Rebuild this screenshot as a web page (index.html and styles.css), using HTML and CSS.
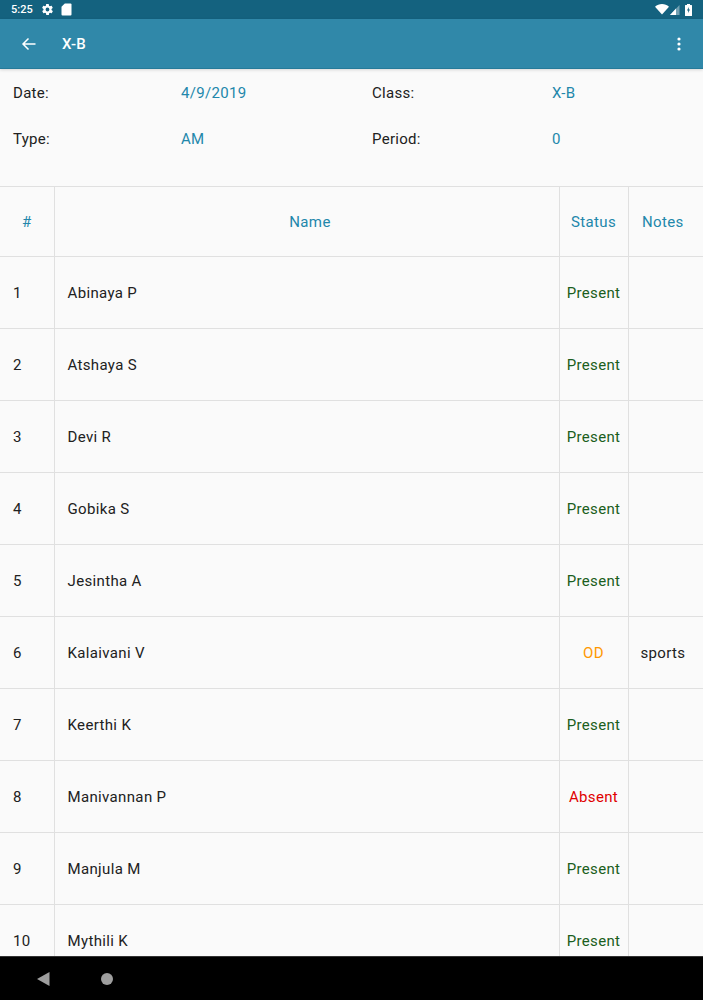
FILE: index.html
```html
<!DOCTYPE html>
<html lang="en">
<head>
<meta charset="utf-8">
<title>X-B</title>
<link rel="stylesheet" href="styles.css">
</head>
<body>
<div class="screen">
  <div class="statusbar">
    <span class="time">5:25</span>
    <svg class="st-icon" width="13" height="13" viewBox="0 0 24 24"><path fill="#fff" d="M19.4 13a7.5 7.5 0 0 0 0-2l2.1-1.6a.5.5 0 0 0 .1-.7l-2-3.4a.5.5 0 0 0-.6-.2l-2.5 1a7.300 7.300 0 0 0-1.700-1l-.4-2.700a.5.5 0 0 0-.5-.4h-4a.5.500 0 0 0-.5.400l-.4 2.700a7.300 7.300 0 0 0-1.700 1l-2.500-1a.5.5 0 0 0-.6.200l-2 3.400a.5.5 0 0 0 .1.700L4.600 11a7.500 7.500 0 0 0 0 2l-2.100 1.600a.5.5 0 0 0-.1.700l2 3.400a.5.5 0 0 0 .6.200l2.500-1a7.300 7.300 0 0 0 1.700 1l.4 2.700a.5.5 0 0 0 .5.400h4a.5.5 0 0 0 .5-.4l.4-2.700a7.300 7.300 0 0 0 1.700-1l2.500 1a.5.5 0 0 0 .6-.2l2-3.400a.5.5 0 0 0-.1-.7zM12 15.500a3.500 3.500 0 1 1 0-7 3.500 3.500 0 0 1 0 7z"/></svg>
    <svg class="st-icon sd" width="11" height="13" viewBox="0 0 11 13"><path fill="#fff" d="M3.800 .5H9.500a1 1 0 0 1 1 1v10a1 1 0 0 1-1 1h-8a1 1 0 0 1-1-1V3.800z"/></svg>
    <span class="spacer"></span>
    <svg class="wifi" width="14" height="11" viewBox="0 0 14 11"><path fill="#fff" d="M0 2.800C2 1 4.400 0 7 0s5 1 7 2.800L7 10.500z"/></svg>
    <svg class="signal" width="10" height="10" viewBox="0 0 10 10"><path fill="#fff" fill-opacity=".4" d="M9.500 0v10H0z"/><path fill="#fff" d="M6 3.500V10H0z"/></svg>
    <svg class="battery" width="7" height="12" viewBox="0 0 7 12"><path fill="#fff" d="M2 0h3v1h1.500a.5.5 0 0 1 .5.500v10a.5.5 0 0 1-.5.500h-6a.5.5 0 0 1-.5-.5v-10A.5.5 0 0 1 .5 1H2z"/><path fill="#14627f" d="M3.800 3 2 6.500h1.200L3 9l2-3.500H3.800z"/></svg>
  </div>
  <header class="appbar">
    <svg class="back" width="16" height="16" viewBox="0 0 16 16"><path fill="none" stroke="#fff" stroke-width="1.500" d="M14.500 8H2M7.500 2.500 2 8l5.500 5.500"/></svg>
    <h1 class="title">X-B</h1>
    <span class="spacer"></span>
    <svg class="more" width="4" height="14" viewBox="0 0 4 14"><circle fill="#fff" cx="2" cy="2" r="1.600"/><circle fill="#fff" cx="2" cy="7" r="1.600"/><circle fill="#fff" cx="2" cy="12" r="1.600"/></svg>
  </header>
  <main class="content">
    <section class="meta">
      <span class="m-label">Date:</span><span class="m-value">4/9/2019</span>
      <span class="m-label">Class:</span><span class="m-value">X-B</span>
      <span class="m-label">Type:</span><span class="m-value">AM</span>
      <span class="m-label">Period:</span><span class="m-value">0</span>
    </section>
    <table class="sheet">
      <colgroup><col class="c-num"><col class="c-name"><col class="c-status"><col class="c-notes"></colgroup>
      <thead>
        <tr><th>#</th><th class="th-name">Name</th><th>Status</th><th class="th-notes">Notes</th></tr>
      </thead>
      <tbody>
        <tr><td class="num">1</td><td class="name">Abinaya P</td><td class="status present">Present</td><td class="notes"></td></tr>
        <tr><td class="num">2</td><td class="name">Atshaya S</td><td class="status present">Present</td><td class="notes"></td></tr>
        <tr><td class="num">3</td><td class="name">Devi R</td><td class="status present">Present</td><td class="notes"></td></tr>
        <tr><td class="num">4</td><td class="name">Gobika S</td><td class="status present">Present</td><td class="notes"></td></tr>
        <tr><td class="num">5</td><td class="name">Jesintha A</td><td class="status present">Present</td><td class="notes"></td></tr>
        <tr><td class="num">6</td><td class="name">Kalaivani V</td><td class="status od">OD</td><td class="notes">sports</td></tr>
        <tr><td class="num">7</td><td class="name">Keerthi K</td><td class="status present">Present</td><td class="notes"></td></tr>
        <tr><td class="num">8</td><td class="name">Manivannan P</td><td class="status absent">Absent</td><td class="notes"></td></tr>
        <tr><td class="num">9</td><td class="name">Manjula M</td><td class="status present">Present</td><td class="notes"></td></tr>
        <tr><td class="num">10</td><td class="name">Mythili K</td><td class="status present">Present</td><td class="notes"></td></tr>
      </tbody>
    </table>
  </main>
  <nav class="navbar">
    <svg class="nav-back" width="13" height="14" viewBox="0 0 13 14"><path fill="#9e9e9e" d="M12.500 0v14L0 7z"/></svg>
    <svg class="nav-home" width="12" height="12" viewBox="0 0 12 12"><circle fill="#9e9e9e" cx="6" cy="6" r="6"/></svg>
  </nav>
</div>
</body>
</html>
```
FILE: styles.css
```css
* { box-sizing: border-box; }
html, body { margin: 0; padding: 0; }
body { font-family: Roboto, "Liberation Sans", sans-serif; background: #fafafa; }
.screen { width: 703px; height: 1000px; display: flex; flex-direction: column; overflow: hidden; }
.statusbar { height: 19px; flex: none; background: #14627f; display: flex; align-items: center; padding: 0 11px 0 11px; color: #fff; }
.time { font-size: 11px; font-weight: 500; width: 30px; }
.st-icon { margin-right: 7px; }
.spacer { flex: 1; }
.wifi { margin-right: 1px; }
.signal { margin-right: 5px; }
.appbar { height: 50px; flex: none; background: #3088a9; border-bottom: 1px solid #267a99; display: flex; align-items: center; padding: 0 21px; color: #fff; box-shadow: 0 1px 3px rgba(0,0,0,.15); position: relative; }
.back { margin-right: 25px; }
.title { margin: 0; font-size: 15px; font-weight: 500; letter-spacing: .2px; }
.more { margin-right: 1px; }
.content { flex: 1; min-height: 0; overflow: hidden; }
.meta { display: grid; grid-template-columns: 168px 191px 180px 1fr; grid-auto-rows: 46px; padding: 1px 0 0 13px; height: 117px; font-size: 15px; letter-spacing: .3px; line-height: 46px; }
.m-label { color: #212121; }
.m-value { color: #2287ab; }
.sheet { width: 703px; border-collapse: collapse; table-layout: fixed; font-size: 15px; letter-spacing: .35px; }
.c-num { width: 54px; }
.c-name { width: 505px; }
.c-status { width: 69px; }
.c-notes { width: 75px; }
th, td { border: 1px solid #e0e0e0; padding: 0; }
tr > :first-child { border-left: 0; }
tr > :last-child { border-right: 0; }
th { height: 70px; font-weight: 400; color: #2287ab; text-align: center; padding-top: 1px; }
.th-name { padding-left: 7px; }
.th-notes { padding-right: 6px; }
td { height: 72px; color: #212121; }
.num { padding-left: 13px; }
.name { padding-left: 13px; }
.status { text-align: center; }
.notes { padding-left: 12px; }
.present { color: #1b5e20; }
.od { color: #ff9800; }
.absent { color: #e00000; }
.navbar { height: 44px; flex: none; background: #000; border-top: 1px solid #333; display: flex; align-items: center; padding-left: 37px; }
.nav-back { margin-right: 51px; }
```
